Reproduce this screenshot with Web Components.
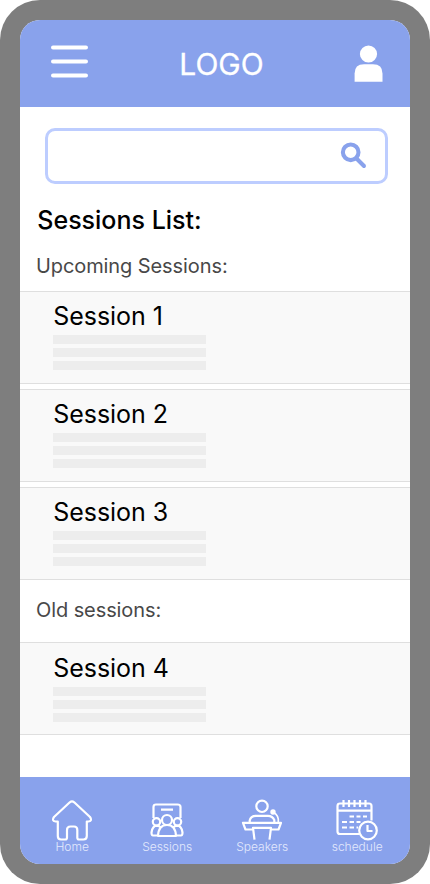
<!DOCTYPE html>
<html lang="en"><head><meta charset="utf-8"><title>Sessions</title>
<style>
html,body{margin:0;background:#fff}
body{width:430px;height:884px;overflow:hidden;font-family:Inter,"Liberation Sans",sans-serif;color:#000}
</style></head><body>
<phone-frame>
  <app-header>LOGO</app-header>
  <search-box></search-box>
  <list-title>Sessions List:</list-title>
  <section-label style="--top:5px">Upcoming Sessions:</section-label>
  <session-list>
    <session-card>Session 1</session-card>
    <session-card>Session 2</session-card>
    <session-card>Session 3</session-card>
  </session-list>
  <section-label style="--h:62.4px;--bottom:2.4px">Old sessions:</section-label>
  <session-card style="--pad:10px">Session 4</session-card>
  <nav-bar slot="footer">
    <nav-item icon="home">Home</nav-item>
    <nav-item icon="sessions">Sessions</nav-item>
    <nav-item icon="speakers">Speakers</nav-item>
    <nav-item icon="schedule">schedule</nav-item>
  </nav-bar>
</phone-frame>
<script>
function define(name, html) {
  customElements.define(name, class extends HTMLElement {
    constructor() {
      super();
      const t = document.createElement('template');
      t.innerHTML = html;
      this.attachShadow({mode: 'open'}).append(t.content.cloneNode(true));
    }
  });
}

define('phone-frame', `<style>
:host{display:block;box-sizing:border-box;width:430px;height:884px;padding:20px;background:#7e7e7e;border-radius:40px}
.screen{display:flex;flex-direction:column;height:844px;border-radius:20px;overflow:hidden;background:#fff}
main{flex:1;min-height:0}
</style><div class="screen"><main><slot></slot></main><slot name="footer"></slot></div>`);

define('app-header', `<style>
:host{display:flex;align-items:center;justify-content:space-between;box-sizing:border-box;height:87.4px;padding:0 27px 0 31px;background:#89a2ec;color:#fff}
.logo{font-size:30px;line-height:36px;padding-left:1px;-webkit-text-stroke:.3px #fff}
svg{display:block}
.menu{margin-bottom:4px}
</style>
<svg class="menu" width="37" height="34" viewBox="0 0 37 34" fill="#fff"><rect y=".4" width="37" height="4.2" rx="2"/><rect y="14.4" width="37" height="4.2" rx="2"/><rect y="28.4" width="37" height="4.2" rx="2"/></svg>
<span class="logo"><slot></slot></span>
<svg width="29" height="37" viewBox="0 0 29 37" fill="#fff"><circle cx="14.5" cy="9" r="8.6"/><path d="M.6 36.8V28.5Q.6 19.3 10 19.3H19Q28.5 19.3 28.5 28.5V36.8Z"/></svg>`);

define('search-box', `<style>
:host{display:flex;align-items:center;justify-content:flex-end;box-sizing:border-box;width:343px;height:56px;margin:20.6px 0 0 25.3px;padding-right:18px;border:3px solid #bdcdff;border-radius:10px}
svg{display:block;margin-bottom:2px}
</style><svg width="27" height="28" viewBox="0 0 27 28" fill="none" stroke="#89a2ec"><circle cx="10.7" cy="11.3" r="7.8" stroke-width="4.1"/><path d="M16.5 17.5L24 25" stroke-width="4" stroke-linecap="round"/></svg>`);

define('list-title', `<style>
:host{display:block;padding:20px 0 0 17.3px;font-size:25px;line-height:32px;font-weight:500}
</style><slot></slot>`);

define('section-label', `<style>
:host{display:flex;align-items:center;box-sizing:border-box;height:var(--h,55px);padding:var(--top,0) 0 var(--bottom,0) 16px;font-size:20px;line-height:24px;color:#484848;letter-spacing:-.09px}
</style><slot></slot>`);

define('session-list', `<style>:host{display:flex;flex-direction:column;gap:5px}</style><slot></slot>`);

define('session-card', `<style>
:host{display:block;box-sizing:border-box;height:93px;padding:var(--pad,9px) 0 0 33.2px;background:#f9f9f9;border-top:1px solid #dfdfdf;border-bottom:1px solid #dfdfdf}
.name{font-size:25px;line-height:31px;letter-spacing:-.03px}
.lines{display:grid;gap:4px;margin-top:3px}
i{display:block;width:152.6px;height:9px;background:#ededed}
</style><div class="name"><slot></slot></div><div class="lines"><i></i><i></i><i></i></div>`);

define('nav-bar', `<style>
:host{display:grid;grid-template-columns:repeat(4,95px);box-sizing:border-box;height:87.4px;padding:20px 0 0 4.7px;background:#89a2ec;color:#fff}
</style><slot></slot>`);

const icons = {
home: `<path d="M5.8 21.5H3.5Q-.8 20.8 2 17L17.8 2.3Q20 .5 22.2 2.3L38 17Q40.8 20.8 36.5 21.5H34.8V36Q34.8 39.5 31.5 39.5H27Q25.3 39.5 25.3 37.500V30Q25.300 26.500 22 26.500H18.500Q15 26.500 15 30V37.500Q15 39.500 13.300 39.500H9Q5.800 39.500 5.800 36Z"/>`,
sessions: `<path d="M6.500 18V7Q6.500 4.500 9 4.500H30.500Q33.500 4.500 33.500 7V18M14 9.700H26"/><circle cx="20" cy="20" r="5"/><circle cx="9.500" cy="21.800" r="3.700"/><circle cx="30.500" cy="21.800" r="3.700"/><path d="M11 36Q11.500 25 20 25T29 36ZM10.500 35.500H6Q4.500 35.500 4.500 32.500Q5.500 25.700 10 25.700Q12.500 26 14 28M29.500 35.500H34Q35.500 35.500 35.500 32.500Q34.500 25.700 30 25.700Q27.500 26 26 28"/>`,
speakers: `<circle cx="20" cy="6.300" r="5.700"/><path d="M7.700 22V20.500Q8.500 15.800 14 15.800H26Q30.500 15.800 32.300 20V22"/><circle cx="31" cy="12" r="1.600" fill="#fff"/><path d="M31.500 12.500Q37 15.500 36.300 22" stroke-width="1.600"/><path d="M10.500 29.500H3.500L1 22.800H39L36.500 29.500H29.500M12.500 39.700L11 27.800H29L27.500 39.700"/>`,
schedule: `<path d="M22.500 34H3Q0.500 34 0.500 31.500V6Q0.500 3.500 3 3.500H32Q34.500 3.500 34.500 6V20.500M0.500 10.700H34.500M6.500 0V7M12 0V7M17.500 0V7M23 0V7M28.500 0V7"/><path d="M12.500 16.500H17M19.500 16.500H23.500M26 16.500H30M5 22H10M12.500 22H17M19.500 22H23.500M5 27.500H10M12.500 27.500H17M19.500 27.500H21" stroke-width="2.200"/><circle cx="31" cy="30.500" r="8.800"/><path d="M30.500 25V31H35.500"/>`
};
customElements.define('nav-item', class extends HTMLElement {
  connectedCallback() {
    const root = this.attachShadow({mode: 'open'});
    root.innerHTML = `<style>
:host{display:flex;flex-direction:column;align-items:center;font-size:12px;font-weight:300;line-height:14px}
svg{display:block;overflow:visible;height:43px;margin:3.4px 0 -3.4px}
span{color:#e3e9fc}
</style><svg width="40" height="43" viewBox="0 0 40 43" fill="none" stroke="#fff" stroke-width="2.2" stroke-linejoin="round">${icons[this.getAttribute('icon')]}</svg><span><slot></slot></span>`;
  }
});
</script></body></html>
